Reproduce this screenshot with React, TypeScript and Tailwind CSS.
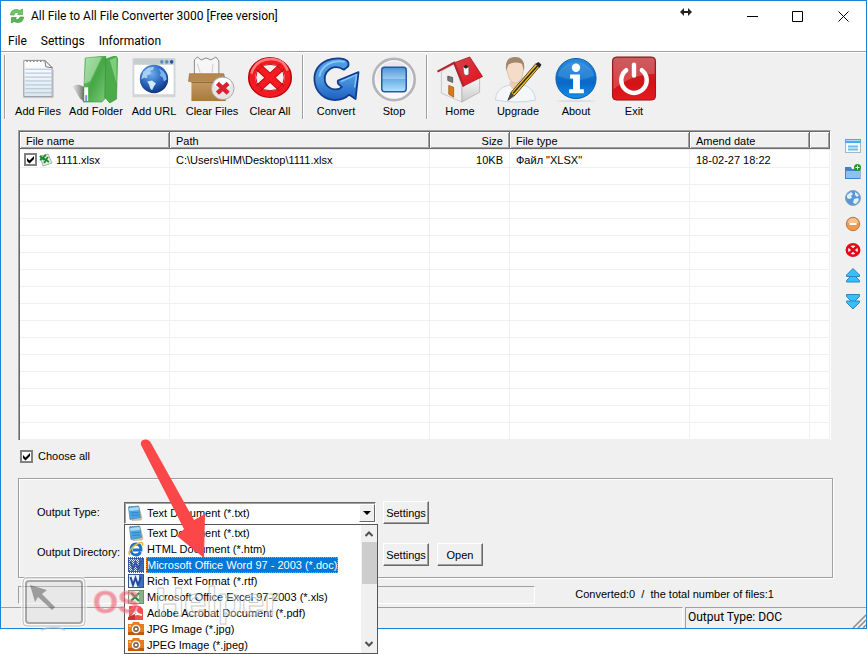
import type { ReactNode } from 'react';

const face = "font-['Liberation_Sans',Arial,sans-serif]";
const uiFace = "font-['Roboto','Open_Sans',sans-serif]";

/* ---------- toolbar icons ---------- */

function PageIcon() {
  return (
    <svg viewBox="0 0 48 48" className="size-12" aria-hidden="true">
      <defs>
        <linearGradient id="pg" x1="0" y1="0" x2="0" y2="1">
          <stop offset="0" stopColor="#fff" />
          <stop offset="1" stopColor="#dfe6ea" />
        </linearGradient>
      </defs>
      <path d="M9.500 4.500H31L38.500 12V41.500H9.500Z" fill="url(#pg)" stroke="#8f979c" />
      <path d="M9 42.500H39.500V14" fill="none" stroke="#c3c3c3" />
      <g stroke="#a9bfdb">
        {[13, 17, 21, 25, 29, 33, 37].map((y) => (
          <path key={y} d={`M11 ${y}.5H38`} />
        ))}
      </g>
      <path d="M12 5H30" stroke="#888" strokeWidth="2" strokeDasharray="1.500 2" />
      <path d="M31 4.500L32 11L38.500 12Z" fill="#f7f7f7" stroke="#777" />
    </svg>
  );
}

function FolderIcon() {
  return (
    <svg viewBox="0 0 48 48" className="size-12" aria-hidden="true">
      <defs>
        <linearGradient id="fg" x1="0" y1="0" x2="1" y2="1">
          <stop offset="0" stopColor="#8fd68e" />
          <stop offset=".5" stopColor="#45a745" />
          <stop offset="1" stopColor="#7cc97b" />
        </linearGradient>
        <linearGradient id="fs" x1="0" y1="0" x2="1" y2="0">
          <stop offset="0" stopColor="#bbb" stopOpacity=".3" />
          <stop offset="1" stopColor="#555" />
        </linearGradient>
      </defs>
      <path d="M0 31C5 28 9 29 13 33V47L8 44Z" fill="url(#fs)" />
      <path d="M13 2L34 0V43L30 47L11 47Z" fill="url(#fg)" stroke="#3c963c" strokeWidth=".6" />
      <path d="M14 2L30 1L18 26L12 28Z" fill="#c5ecc2" opacity=".55" />
      <path d="M34 3L43 0Q46 0 46 3L45 44L38 48L33 42Z" fill="#4bab4a" stroke="#2f8930" strokeWidth=".6" />
      <path d="M38 4L45 1V28Z" fill="#7dce7a" />
      <path d="M12 32H16V46H12Z" fill="#fff" />
      <path d="M13 40H15V46H13Z" fill="#7a8ee5" />
    </svg>
  );
}

function UrlIcon() {
  return (
    <svg viewBox="0 0 48 48" className="size-12" aria-hidden="true">
      <defs>
        <radialGradient id="gl" cx=".4" cy=".3" r=".8">
          <stop offset="0" stopColor="#6fb1ef" />
          <stop offset=".5" stopColor="#2b67bf" />
          <stop offset="1" stopColor="#0a246f" />
        </radialGradient>
      </defs>
      <rect x="2" y="2" width="44" height="40" rx="1" fill="#d3d6d8" />
      <rect x="3" y="3" width="42" height="6" fill="#c5cdd1" />
      <rect x="4" y="9" width="40" height="30" fill="#fff" />
      <circle cx="32" cy="6" r="1.800" fill="#5d8fbb" />
      <circle cx="37" cy="6" r="1.800" fill="#5d8fbb" />
      <circle cx="42" cy="6" r="1.800" fill="#1b57b4" />
      <circle cx="24" cy="23.500" r="14.500" fill="url(#gl)" />
      <path d="M13 16L18 12L24 11L23 14L20 15L21 18L17 20L17 23L14 22L11 24Z" fill="#a9cff3" />
      <path d="M17 26L22 25L26 28L24 31L22 35L20 33L19 29Z" fill="#d3e8fb" />
      <path d="M29 13L33 15L36 19L37 24L34 26L33 22L30 20L31 17Z" fill="#7db3ea" />
    </svg>
  );
}

function BoxIcon() {
  return (
    <svg viewBox="0 0 48 48" className="size-12" aria-hidden="true">
      <defs>
        <linearGradient id="bx" x1="0" y1="0" x2="0" y2="1">
          <stop offset="0" stopColor="#c49a63" />
          <stop offset="1" stopColor="#a8793f" />
        </linearGradient>
      </defs>
      <path d="M6 19V4L9 1L13 4L18 2L23 4L28 1L31 5V19Z" fill="#f6f6f6" stroke="#888" />
      <path d="M9 8L12 17M25 8L24 17" stroke="#ccc" />
      <path d="M1 18H36L38 26H0Z" fill="#b6884f" stroke="#94662e" strokeWidth=".6" />
      <rect x="3" y="26" width="35" height="20" fill="url(#bx)" />
      <path d="M3 27H38" stroke="#8e6532" />
      <circle cx="35" cy="33" r="11.500" fill="#e6e6e6" stroke="#aaa" />
      <ellipse cx="35" cy="28" rx="8.500" ry="5.500" fill="#fff" />
      <path d="M29.500 28L40.500 38M40.500 28L29.500 38" stroke="#d92331" strokeWidth="4.500" />
    </svg>
  );
}

function ClearAllIcon() {
  return (
    <svg viewBox="0 0 48 48" className="size-12" aria-hidden="true">
      <ellipse cx="24" cy="22" rx="21.500" ry="20" fill="#f7eeee" stroke="#b80009" strokeWidth="2" />
      <ellipse cx="24" cy="22" rx="18" ry="16.800" fill="none" stroke="#f51922" strokeWidth="6" />
      <path d="M12 11L36 33M36 11L12 33" stroke="#bd0c13" strokeWidth="8" />
      <path d="M12 11L36 33M36 11L12 33" stroke="#f51922" strokeWidth="6" />
      <path d="M5 18C8 6 18 3 25 3C34 3 40 8 42 15" fill="none" stroke="#ff7d7d" strokeWidth="2.500" />
      <ellipse cx="24" cy="22" rx="14.500" ry="13.500" fill="none" stroke="#b91016" strokeWidth="1" />
    </svg>
  );
}

function ConvertIcon() {
  return (
    <svg viewBox="0 0 48 48" className="size-12" aria-hidden="true">
      <defs>
        <linearGradient id="cv" x1="0" y1="0" x2="0" y2="1">
          <stop offset="0" stopColor="#4e9de6" />
          <stop offset=".5" stopColor="#4a95e0" />
          <stop offset="1" stopColor="#1b5fc0" />
        </linearGradient>
      </defs>
      <path
        d="M35.500 5C32 1.500 22 1.500 15 4.500C6 8.500 1.500 16 2 25C3 37 12 45 23 45C30 45 34 43 37.500 39.500L44 44L47 16.500L26 25Q25 28 28 30L30 31.500C27 35 21 35 17 32C12 29 11 21 14.500 16.500C18 12 23 10.500 28 12L32 14L36.500 10.500Q37.500 7 35.500 5Z"
        fill="url(#cv)" stroke="#113d8c" strokeWidth="1.800" strokeLinejoin="round"
      />
      <path d="M33 6C20 3 9 10 7 21" fill="none" stroke="#8cc6f6" strokeWidth="2" />
      <path d="M29 26L45 19L43 32" fill="none" stroke="#83c2f5" strokeWidth="1.500" />
    </svg>
  );
}

function StopIcon() {
  return (
    <svg viewBox="0 0 48 48" className="size-12" aria-hidden="true">
      <defs>
        <linearGradient id="st" x1="0" y1="0" x2="0" y2="1">
          <stop offset="0" stopColor="#4d94da" />
          <stop offset=".48" stopColor="#9ccbf1" />
          <stop offset=".5" stopColor="#6aaee8" />
          <stop offset="1" stopColor="#b4e2fc" />
        </linearGradient>
        <linearGradient id="sr" x1="0" y1="0" x2="0" y2="1">
          <stop offset="0" stopColor="#e4e4e4" />
          <stop offset="1" stopColor="#fdfdfd" />
        </linearGradient>
      </defs>
      <circle cx="24" cy="24" r="21" fill="url(#sr)" stroke="#b3b5b8" strokeWidth="3" />
      <circle cx="24" cy="24" r="19" fill="none" stroke="#f6f6f6" strokeWidth="1.500" />
      <rect x="11.500" y="11.500" width="25" height="25" rx="3" fill="url(#st)" stroke="#2457a4" strokeWidth="1.500" />
    </svg>
  );
}

function HomeIcon() {
  return (
    <svg viewBox="0 0 48 48" className="size-12" aria-hidden="true">
      <defs>
        <linearGradient id="hw" x1="0" y1="0" x2="0" y2="1">
          <stop offset="0" stopColor="#fafafa" />
          <stop offset="1" stopColor="#c9c9c9" />
        </linearGradient>
        <linearGradient id="hr" x1="0" y1="0" x2="1" y2="1">
          <stop offset="0" stopColor="#d8434c" />
          <stop offset="1" stopColor="#e50d1c" />
        </linearGradient>
      </defs>
      <path d="M5 16L18 8L26 31V47L5 38Z" fill="#efefef" stroke="#b5b5b5" strokeWidth=".7" />
      <path d="M26 31L44 22V37L26 47Z" fill="url(#hw)" stroke="#aaa" strokeWidth=".7" />
      <path d="M18 7L34 1L47 21L27 31Z" fill="url(#hr)" stroke="#9b1a22" strokeWidth=".8" />
      <path d="M1 16L18 7L28 31" fill="none" stroke="#b3232c" strokeWidth="2.200" />
      <path d="M27 10L33 11V19L30 20L28 18Z" fill="#fff" stroke="#555" strokeWidth=".6" />
      <path d="M27 11L30 9L33 11L30 13Z" fill="#3b2020" />
      <path d="M11.500 20.500L16.500 22V27L11.500 25Z" fill="#777" stroke="#444" strokeWidth=".7" />
      <path d="M12.500 30L17.500 32V42L12.500 39Z" fill="#d67b19" stroke="#9e4f08" strokeWidth=".7" />
    </svg>
  );
}

function UpgradeIcon() {
  return (
    <svg viewBox="0 0 48 48" className="size-12" aria-hidden="true">
      <path d="M1 45Q1 33 14 30L29 29Q41 33 42 45Q22 49 1 45Z" fill="#f4f7fa" stroke="#cbd3db" />
      <path d="M15 26H27V32Q21 38 16 31Z" fill="#e9cdb6" />
      <path d="M12 12Q12 2 21 2Q30 2 30 12L28 22Q21 33 15 23Z" fill="#f5dcc8" stroke="#d4b197" strokeWidth=".7" />
      <path d="M12 15Q10 1 21 1Q32 1 30 15L28 8Q20 5 14 9Z" fill="#a3876c" />
      <path d="M42 8L46 11L21 40L14 45L17 37Z" fill="#f1bd28" stroke="#2c2415" strokeWidth=".8" />
      <path d="M44 10L19 38" stroke="#2a2618" strokeWidth="1.500" />
      <path d="M42 8L45 6L48 9L46 12Z" fill="#222" />
      <path d="M17 37L20 40L13 46Z" fill="#454545" />
    </svg>
  );
}

function AboutIcon() {
  return (
    <svg viewBox="0 0 48 48" className="size-12" aria-hidden="true">
      <defs>
        <linearGradient id="ab" x1="0" y1="0" x2="0" y2="1">
          <stop offset="0" stopColor="#2d8bd8" />
          <stop offset=".6" stopColor="#0868c8" />
          <stop offset="1" stopColor="#168ee9" />
        </linearGradient>
      </defs>
      <ellipse cx="24" cy="46" rx="20" ry="1" fill="#ddd" />
      <circle cx="24" cy="23" r="20.500" fill="url(#ab)" stroke="#075cad" />
      <path d="M5 20A20 20 0 0 1 43 20Q24 29 5 20Z" fill="#62aae8" opacity=".35" />
      <circle cx="24" cy="12" r="4.300" fill="#fff" />
      <path d="M18 19H28V34H32V38H17V34H21V23H18Z" fill="#fff" />
    </svg>
  );
}

function ExitIcon() {
  return (
    <svg viewBox="0 0 48 48" className="size-12" aria-hidden="true">
      <defs>
        <linearGradient id="ex" x1="0" y1="0" x2="0" y2="1">
          <stop offset="0" stopColor="#b8383b" />
          <stop offset=".6" stopColor="#d41317" />
          <stop offset="1" stopColor="#e11a1d" />
        </linearGradient>
      </defs>
      <rect x="2" y="1" width="44" height="44" rx="4" fill="url(#ex)" stroke="#94151a" />
      <path d="M3 5Q3 2 6 2H42Q45 2 45 5V18Q20 19 3 34Z" fill="#fff" opacity=".2" />
      <path d="M16 14.500A13 13 0 1 0 32 14.500" fill="none" stroke="#fff" strokeWidth="4.500" strokeLinecap="round" />
      <path d="M24 9V20" stroke="#fff" strokeWidth="4.500" strokeLinecap="round" />
    </svg>
  );
}

/* ---------- small icons ---------- */

function AppLogo() {
  return (
    <svg viewBox="0 0 16 16" className="size-4" aria-hidden="true">
      <path d="M1.500 7Q1.500 1.500 8 1.500L11 2.500L13.500 1V6.500H8.500L10 5Q6 3.500 5 7Z" fill="#6cc862" stroke="#3c9a3c" strokeWidth=".6" />
      <path d="M14.500 9Q14.500 14.500 8 14.500L5 13.500L2.500 15V9.500H7.500L6 11Q10 12.500 11 9Z" fill="#58b950" stroke="#2f8a30" strokeWidth=".6" />
    </svg>
  );
}

function NotepadMini() {
  return (
    <svg viewBox="0 0 16 16" className="size-4 shrink-0" aria-hidden="true">
      <path d="M12 2L15 13L14 15L5 15.500Z" fill="#d5c9a0" stroke="#a39a78" strokeWidth=".5" />
      <path d="M1.500 2L11.500 1L13.500 12.500L3 14.500Z" fill="#49a5e6" stroke="#4b7fa6" strokeWidth=".7" />
      <path d="M2 3L11.500 2L12 5L2.500 6Z" fill="#a9dbf8" />
      <path d="M4 8L11.500 7.500M4.500 10.500L12 10" stroke="#2f86cb" />
      <path d="M2 1.500H12" stroke="#70899a" strokeDasharray="1 1" />
    </svg>
  );
}

function IeMini() {
  return (
    <svg viewBox="0 0 16 16" className="size-4 shrink-0" aria-hidden="true">
      <path d="M12.500 11Q11 14 8 14Q3 14 3 8.500Q3 3 8 3Q13 3 13 9H5" fill="none" stroke="#1d72c8" strokeWidth="2.800" />
      <path d="M2 14Q-1 11 6 5Q13 0 14.500 2Q15 3 14 5" fill="none" stroke="#efb52b" strokeWidth="1.600" />
    </svg>
  );
}

function WordMini({ picked = false }: { picked?: boolean }) {
  return (
    <svg viewBox="0 0 16 16" className="size-4 shrink-0" aria-hidden="true">
      <defs>
        <pattern id="dither" width="2" height="2" patternUnits="userSpaceOnUse">
          <rect width="1" height="1" fill="#0078d7" />
          <rect x="1" y="1" width="1" height="1" fill="#0078d7" />
        </pattern>
      </defs>
      <rect x=".5" y="1.500" width="15" height="13" fill="#e8effa" stroke="#2b579a" />
      <path d="M11 2H15V14H11Z" fill="#3d6cc0" />
      <path d="M2.500 4L5 12L7.500 5L10 12L13 4" fill="none" stroke="#204b98" strokeWidth="2" />
      {picked && <rect width="16" height="16" fill="url(#dither)" />}
    </svg>
  );
}

function ExcelMini() {
  return (
    <svg viewBox="0 0 16 16" className="size-4 shrink-0" aria-hidden="true">
      <rect x=".5" y="1.500" width="15" height="13" fill="#e7efe4" stroke="#6f8f70" />
      <path d="M11 2H15V14H11Z" fill="#89b08a" />
      <path d="M3 4L11 12M11 4L3 12" stroke="#2c8742" strokeWidth="2.200" />
    </svg>
  );
}

function PdfMini() {
  return (
    <svg viewBox="0 0 16 16" className="size-4 shrink-0" aria-hidden="true">
      <path d="M1 1H12L15 4V15H1Z" fill="#eb5350" />
      <path d="M9 2Q7 9 2 13M7 5Q10 10 14 10M4 11Q9 8 13 10" fill="none" stroke="#fff" strokeWidth="1.700" />
      <path d="M0 12L7 9V15H0Z" fill="#cb3332" />
    </svg>
  );
}

function CameraMini() {
  return (
    <svg viewBox="0 0 16 16" className="size-4 shrink-0" aria-hidden="true">
      <path d="M0 3H4L5 1H11L12 3H16V14H0Z" fill="#e87b1b" />
      <path d="M0 11H16V14H0Z" fill="#c25b09" />
      <circle cx="8" cy="8" r="4.300" fill="#fff" />
      <circle cx="8" cy="8" r="2.900" fill="#7b6656" />
      <circle cx="8" cy="8" r="1.300" fill="#fff" />
      <path d="M1 5H3" stroke="#fff" />
    </svg>
  );
}

function XlsxMini() {
  return (
    <svg viewBox="0 0 14 14" className="size-3.5" aria-hidden="true">
      <path d="M1 3L9 1L13 10L4 13Z" fill="#e5f1e3" stroke="#809b7f" strokeWidth=".7" />
      <path d="M1 3L5 7M7 2L1 7M4 5L10 9M9 4L5 10" stroke="#1c8a2d" strokeWidth="1.800" />
    </svg>
  );
}

/* ---------- data ---------- */

type Tool = { label: string; icon: ReactNode };

const toolGroups: Tool[][] = [
  [
    { label: 'Add Files', icon: <PageIcon /> },
    { label: 'Add Folder', icon: <FolderIcon /> },
    { label: 'Add URL', icon: <UrlIcon /> },
    { label: 'Clear Files', icon: <BoxIcon /> },
    { label: 'Clear All', icon: <ClearAllIcon /> },
  ],
  [
    { label: 'Convert', icon: <ConvertIcon /> },
    { label: 'Stop', icon: <StopIcon /> },
  ],
  [
    { label: 'Home', icon: <HomeIcon /> },
    { label: 'Upgrade', icon: <UpgradeIcon /> },
    { label: 'About', icon: <AboutIcon /> },
    { label: 'Exit', icon: <ExitIcon /> },
  ],
];

const formats: Tool[] = [
  { label: 'Text Document (*.txt)', icon: <NotepadMini /> },
  { label: 'HTML Document (*.htm)', icon: <IeMini /> },
  { label: 'Microsoft Office Word 97 - 2003 (*.doc)', icon: <WordMini picked /> },
  { label: 'Rich Text Format (*.rtf)', icon: <WordMini /> },
  { label: 'Microsoft Office Excel 97-2003 (*.xls)', icon: <ExcelMini /> },
  { label: 'Adobe Acrobat Document (*.pdf)', icon: <PdfMini /> },
  { label: 'JPG Image (*.jpg)', icon: <CameraMini /> },
  { label: 'JPEG Image (*.jpeg)', icon: <CameraMini /> },
];
const selectedFormat = 2;

const sideTools: Tool[] = [
  {
    label: 'Add files',
    icon: (
      <>
        <rect x=".5" y="1.500" width="15" height="13" fill="#f4fafd" stroke="#9db9c7" />
        <path d="M0 1H16V5H0Z" fill="#45aee8" />
        <path d="M1 2.500H15" stroke="#a7ddf8" />
        <path d="M3 8.500H13M3 11.500H13" stroke="#6ac1ec" strokeWidth="2" />
      </>
    ),
  },
  {
    label: 'Add folder',
    icon: (
      <>
        <path d="M0 3H6L7 5H15.500V15H0Z" fill="#3b83cb" />
        <path d="M1 7H15V14H1Z" fill="#8fc1ef" />
        <circle cx="12.500" cy="3.500" r="3.500" fill="#1e9a23" />
        <path d="M12.500 1.500V5.500M10.500 3.500H14.500" stroke="#fff" />
      </>
    ),
  },
  {
    label: 'Add URL',
    icon: (
      <>
        <circle cx="8" cy="8" r="7.500" fill="#5797d6" stroke="#8aa2b6" />
        <path d="M2 5L6 2L8 4L6 6L7 8L4 9L2 8ZM9 9L13 8L14 10L11 14L8 13ZM10 2L14 5L12 7L10 5Z" fill="#e2f0fa" />
      </>
    ),
  },
  {
    label: 'Remove',
    icon: (
      <>
        <circle cx="8" cy="8" r="6.700" fill="#f0984b" stroke="#b5774a" />
        <path d="M2.500 7Q4 2 8 2Q12 2 13.500 7Z" fill="#f8c08d" />
        <path d="M4.500 8H11.500" stroke="#fff" strokeWidth="2" />
      </>
    ),
  },
  {
    label: 'Remove all',
    icon: (
      <>
        <ellipse cx="8" cy="8" rx="6.200" ry="5.700" fill="#fbe9e9" stroke="#df0b16" strokeWidth="2.500" />
        <path d="M3.500 4L12.500 12M12.500 4L3.500 12" stroke="#df0b16" strokeWidth="2.500" />
      </>
    ),
  },
  {
    label: 'Move up',
    icon: (
      <>
        <path d="M8 6L14.500 12.500V14H1.500V12.500Z" fill="#35c0fa" stroke="#2f84bd" />
        <path d="M8 .5L14.500 7V8.500H1.500V7Z" fill="#35c0fa" stroke="#2f84bd" />
      </>
    ),
  },
  {
    label: 'Move down',
    icon: (
      <>
        <path d="M8 9L14.500 2.500V.5H1.500V2.500Z" fill="#35c0fa" stroke="#2f84bd" />
        <path d="M8 15L14.500 8.500V7H1.500V8.500Z" fill="#35c0fa" stroke="#2f84bd" />
      </>
    ),
  },
];

/* ---------- controls ---------- */

function Tick({ label, id }: { label: string; id: string }) {
  return (
    <span className="grid shrink-0">
      <input
        id={id}
        type="checkbox"
        defaultChecked
        aria-label={label}
        className="col-start-1 row-start-1 size-[13px] appearance-none border-2 border-[#808080] bg-white"
      />
      <svg viewBox="0 0 13 13" className="pointer-events-none col-start-1 row-start-1 size-[13px]" aria-hidden="true">
        <path d="M3 5V8L5.500 10.500L10 6V3L5.500 7.500Z" fill="#000" />
      </svg>
    </span>
  );
}

function PushButton({ children }: { children: ReactNode }) {
  return (
    <button
      type="button"
      className="h-[23px] w-[46px] shrink-0 border border-t-white border-r-[#696969] border-b-[#696969] border-l-white bg-[#f0f0f0] text-center shadow-[inset_-1px_-1px_0_#a0a0a0]"
    >
      {children}
    </button>
  );
}

function TitleBar() {
  return (
    <header className={`flex h-[30px] items-center bg-white pl-2 text-xs ${uiFace}`}>
      <AppLogo />
      <h1 className="ml-1.5 flex-1 whitespace-nowrap">All File to All File Converter 3000 [Free version]</h1>
      <svg viewBox="0 0 12 8" className="mr-[38px] mb-2 h-2 w-3" aria-hidden="true">
        <path d="M0 4L4 0V3H8V0L12 4L8 8V5H4V8Z" fill="#222" />
      </svg>
      <button type="button" aria-label="Minimize" className="flex h-full w-[45px] items-center justify-center">
        <svg viewBox="0 0 11 11" className="size-[11px]"><path d="M0 5.500H11" stroke="#000" /></svg>
      </button>
      <button type="button" aria-label="Maximize" className="flex h-full w-[45px] items-center justify-center">
        <svg viewBox="0 0 11 11" className="size-[11px]"><path d="M.5.5H10.500V10.500H.5Z" stroke="#000" fill="none" /></svg>
      </button>
      <button type="button" aria-label="Close" className="flex h-full w-[46px] items-center justify-center">
        <svg viewBox="0 0 11 11" className="size-[11px]"><path d="M.5.5L10.500 10.500M10.500.5L.5 10.500" stroke="#000" /></svg>
      </button>
    </header>
  );
}

function Toolbar() {
  return (
    <div role="toolbar" aria-label="Main" className="flex h-[78px] items-start border-t border-white pt-[2px] pl-[3px]">
      {toolGroups.map((group, i) => (
        <div key={i} className="mr-[3px] flex border-l border-[#a0a0a0] pl-1 shadow-[inset_1px_0_0_#fff]">
          {group.map((tool) => (
            <button key={tool.label} type="button" className="flex h-16 w-[58px] flex-col items-center pt-px whitespace-nowrap">
              {tool.icon}
              <span className="leading-4">{tool.label}</span>
            </button>
          ))}
        </div>
      ))}
    </div>
  );
}

function FileTable() {
  const th =
    'h-[17px] border-r border-b border-[#696969] bg-[#f0f0f0] px-1.5 pt-px text-left font-normal leading-[14px] shadow-[inset_1px_1px_0_#fff,inset_-1px_-1px_0_#a0a0a0]';
  const td = 'h-[17px] border-r border-b border-[#f0f0f0] px-1.5 leading-[14px] whitespace-nowrap';
  const first = `${td} h-[19px] border-t pt-0.5`;
  return (
    <div className="min-w-0 flex-1 border-t border-r border-l border-t-[#a0a0a0] border-r-white border-l-[#a0a0a0]">
      <table className="w-full table-fixed border-separate border-spacing-0 border-t border-l border-[#696969] bg-white">
        <colgroup>
          <col className="w-[150px]" />
          <col />
          <col className="w-[80px]" />
          <col className="w-[180px]" />
          <col className="w-[120px]" />
          <col className="w-[20px]" />
        </colgroup>
        <thead>
          <tr>
            <th className={th}>File name</th>
            <th className={th}>Path</th>
            <th className={`${th} text-right`}>Size</th>
            <th className={th}>File type</th>
            <th className={th}>Amend date</th>
            <th className={th} aria-label="Empty" />
          </tr>
        </thead>
        <tbody>
          <tr>
            <td className={`${first} pl-1`}>
              <span className="flex items-center">
                <Tick id="row-1" label="1111.xlsx" />
                <span className="mr-[3px] ml-0.5"><XlsxMini /></span>
                1111.xlsx
              </span>
            </td>
            <td className={first}>C:\Users\HIM\Desktop\1111.xlsx</td>
            <td className={`${first} text-right`}>10KB</td>
            <td className={first}>Файл "XLSX"</td>
            <td className={first}>18-02-27 18:22</td>
            <td className={first} />
          </tr>
          {Array.from({ length: 16 }, (_, r) => (
            <tr key={r}>
              {Array.from({ length: 6 }, (_, c) => (
                <td key={c} className={td} />
              ))}
            </tr>
          ))}
        </tbody>
      </table>
    </div>
  );
}

function SideBar() {
  return (
    <nav aria-label="List tools" className="flex w-[35px] flex-col items-center gap-2.5 pt-2 pl-2">
      {sideTools.map((tool) => (
        <button key={tool.label} type="button" aria-label={tool.label} className="size-4 shrink-0 grow-0">
          <svg viewBox="0 0 16 16" className="size-4">{tool.icon}</svg>
        </button>
      ))}
    </nav>
  );
}

function FormatList() {
  return (
    <div className="absolute top-[22px] left-0 z-10 flex w-[254px] border border-[#555] bg-white">
      <ul role="listbox" aria-label="Output formats" className="flex-1">
        {formats.map((f, i) => (
          <li
            key={f.label}
            role="option"
            aria-selected={i === selectedFormat}
            className="flex h-4 items-center gap-0.5 pl-[3px] leading-4 whitespace-nowrap"
          >
            {f.icon}
            <span
              className={
                i === selectedFormat
                  ? 'h-4 bg-[#0078d7] px-px text-white outline-1 -outline-offset-1 outline-dotted outline-[#ff8728]'
                  : 'px-px'
              }
            >
              {f.label}
            </span>
          </li>
        ))}
      </ul>
      <div className="flex w-4 flex-col items-center bg-[#f0f0f0] py-1.5" aria-hidden="true">
        <svg viewBox="0 0 8 6" className="h-1.5 w-2"><path d="M.5 5L4 1.500L7.500 5" fill="none" stroke="#505050" strokeWidth="2" /></svg>
        <div className="mt-[5px] h-[42px] w-[15px] bg-[#cdcdcd]" />
        <svg viewBox="0 0 8 6" className="mt-auto h-1.5 w-2"><path d="M.5 1L4 4.500L7.500 1" fill="none" stroke="#505050" strokeWidth="2" /></svg>
      </div>
    </div>
  );
}

function OutputPanel() {
  return (
    <section aria-label="Output" className="mr-[33px] ml-[17px] flex h-[100px] flex-col gap-[19px] border border-[#a0a0a0] pt-[22px] pl-[18px] shadow-[inset_1px_1px_0_#fff,1px_1px_0_#fff]">
      <div className="flex items-start">
        <label htmlFor="output-type" className="w-[87px] shrink-0 pt-1">Output Type:</label>
        <div className="relative mt-px mr-[7px] w-[252px] shrink-0">
          <div className="flex h-[22px] items-center border border-[#696969] border-r-white border-b-white bg-white pl-0.5 shadow-[inset_1px_1px_0_#a0a0a0]">
            <NotepadMini />
            <select id="output-type" className="h-full min-w-0 flex-1 appearance-none bg-transparent pl-1">
              {formats.map((f) => (
                <option key={f.label}>{f.label}</option>
              ))}
            </select>
            <span className="flex h-[18px] w-4 items-center justify-center border border-t-white border-r-[#696969] border-b-[#696969] border-l-white bg-[#f0f0f0]">
              <svg viewBox="0 0 8 4" className="h-1 w-2" aria-hidden="true"><path d="M0 0H8L4 4Z" fill="#000" /></svg>
            </span>
          </div>
          <FormatList />
        </div>
        <PushButton>Settings</PushButton>
      </div>
      <div className="flex items-start">
        <label htmlFor="output-dir" className="w-[87px] shrink-0 pt-0.5 whitespace-nowrap">Output Directory:</label>
        <input id="output-dir" className="mr-[7px] h-[22px] w-[252px] shrink-0 border border-[#a0a0a0] bg-white" />
        <PushButton>Settings</PushButton>
        <span className="ml-2 flex"><PushButton>Open</PushButton></span>
      </div>
    </section>
  );
}

function Watermark() {
  return (
    <div className="pointer-events-none absolute bottom-0 left-5 z-20 flex h-[52px] items-center opacity-60" aria-hidden="true">
      <svg viewBox="0 0 66 56" className="mt-1 h-14 w-[66px]">
        <rect x="3" y="3" width="60" height="46" rx="4" fill="#d8d8d8" fillOpacity=".5" stroke="#fff" strokeWidth="6" />
        <rect x="2" y="2" width="62" height="48" rx="4" fill="none" stroke="#999" />
        <rect x="5" y="5" width="56" height="42" rx="3" fill="none" stroke="#777" strokeWidth="2" />
        <path d="M9 9L26 14L21 18L34 31L31 34L17 21L14 26Z" fill="#666" />
        <path d="M20 54Q33 49 44 54" stroke="#bbb" strokeWidth="2" fill="none" />
      </svg>
      <span className="ml-1.5 text-[32px] leading-8 font-bold text-[#ed5b6d] [-webkit-text-stroke:1px_#f58f9b]">OS</span>
      <span className="ml-4 text-[40px] leading-8 font-bold text-[#ffffff99] [-webkit-text-stroke:1px_#aaa]">Helper</span>
    </div>
  );
}

function Pointer() {
  return (
    <svg viewBox="0 0 80 130" className="pointer-events-none absolute -top-0.5 left-[134px] z-20 h-[130px] w-20" aria-hidden="true">
      <path d="M6 7Q5 2 10 1.500Q14 1 16 5L59 82L70 76L69 120L42 98L49 91Z" fill="#fb4747" />
    </svg>
  );
}

export default function App() {
  return (
    <div className={`min-h-screen bg-white text-[11px] leading-[14px] text-black ${face}`}>
      <div className="flex flex-col border border-[#1883d7] bg-[#f0f0f0]">
        <TitleBar />
        <nav aria-label="Menu" className={`flex h-[21px] items-center gap-3.5 border-b border-[#a0a0a0] bg-white pl-[7px] text-xs ${uiFace}`}>
          <button type="button">File</button>
          <button type="button">Settings</button>
          <button type="button">Information</button>
        </nav>
        <Toolbar />
        <main className="flex pl-[17px]">
          <FileTable />
          <SideBar />
        </main>
        <div className="relative flex flex-col">
          <div className="mt-[9px] mb-[15px] ml-[19px] flex h-[14px] items-center gap-[5px]">
            <Tick id="choose-all" label="Choose all" />
            <label htmlFor="choose-all">Choose all</label>
          </div>
          <OutputPanel />
          <div className="mt-2 ml-[17px] flex h-[21px] items-start">
            <div role="progressbar" aria-label="Conversion progress" className="h-[18px] w-[61%] border border-t-[#a0a0a0] border-r-white border-b-white border-l-[#a0a0a0]" />
            <p className="ml-10 pt-px whitespace-pre">Converted:0  /  the total number of files:1</p>
          </div>
          <footer className={`flex h-[21px] gap-0.5 text-xs leading-[19px] ${uiFace}`}>
            <div className="flex-1 border-t border-r border-t-[#a0a0a0] border-r-white" />
            <div className="flex w-[181px] justify-between border-t border-l border-[#a0a0a0] pl-0.5">
              <span>Output Type: DOC</span>
              <svg viewBox="0 0 14 14" className="mt-1.5 size-3.5" aria-hidden="true">
                <path d="M1 14L14 1M6 14L14 6M11 14L14 11" stroke="#8c8c8c" strokeWidth="1.500" />
              </svg>
            </div>
          </footer>
          <Watermark />
          <Pointer />
        </div>
      </div>
    </div>
  );
}
